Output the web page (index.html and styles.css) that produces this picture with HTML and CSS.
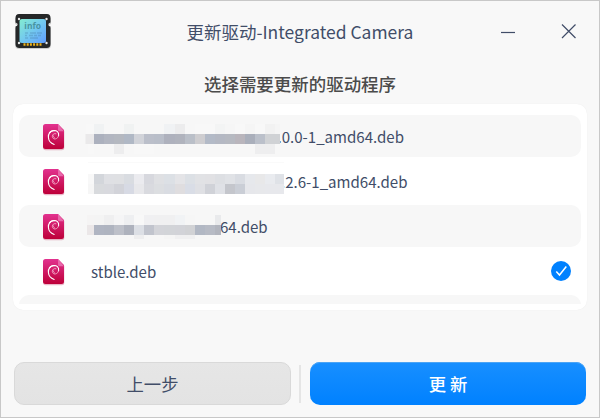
FILE: index.html
```html
<!DOCTYPE html>
<html lang="zh-CN">
<head>
<meta charset="utf-8">
<title>更新驱动-Integrated Camera</title>
<link rel="stylesheet" href="styles.css">
</head>
<body>
<svg class="defs" width="0" height="0" aria-hidden="true">
  <defs>
    <linearGradient id="deb-fill" x1="0" y1="0" x2="0" y2="1"><stop offset="0" stop-color="#e2328f"/><stop offset="1" stop-color="#bd0039"/></linearGradient>
    <symbol id="deb" viewBox="0 0 22 27">
      <path d="M2.5 1.2H15.5L21.3 7V23.7a2.5 2.5 0 0 1-2.5 2.5H2.7A2.5 2.5 0 0 1 .2 23.7V3.5Z" fill="#b4003c" opacity=".28"/>
      <path d="M2.5 0H15L21 6V22.5A2.5 2.5 0 0 1 18.5 25H2.5A2.5 2.5 0 0 1 0 22.5V2.5A2.5 2.5 0 0 1 2.5 0Z" fill="url(#deb-fill)"/>
      <path d="M15 0L21 7.2H16.5A1.5 1.5 0 0 1 15 5.7Z" fill="#e868aa"/>
      <path d="M15.600 11.800C16.200 8.200 13.600 6.300 10.700 6.500C7.200 6.700 5.200 9.800 5.400 13.200C5.600 16.500 7.800 19.200 11.200 20.400" fill="none" stroke="#fff" stroke-width="1.100" stroke-linecap="round"/>
      <path d="M6.300 9.300C7.500 7.200 10 6.300 12.300 6.700" fill="none" stroke="#fff" stroke-width="1.300"/>
      <path d="M13.300 9.800C11 9.100 9.300 10.500 9.300 12.300C9.400 14.200 10.900 15.400 12.500 14.900C14.200 14.500 15.300 13.300 15.500 11.600M10.600 11.600C10.200 13 11 13.900 12 14" fill="none" stroke="#fbd0e2" stroke-width=".7"/>
    </symbol>
  </defs>
</svg>
<div class="window">
  <header class="titlebar">
    <svg class="app-icon" width="38" height="36" viewBox="0 0 38 36">
      <defs><linearGradient id="screen" x1="0" y1="0" x2="1" y2="1"><stop offset="0" stop-color="#83ecd0"/><stop offset=".5" stop-color="#73c9ef"/><stop offset="1" stop-color="#609dff"/></linearGradient></defs>
      <path d="M5 2H33Q37 2 37 6V10Q34.800 10.500 34.800 12.200T37 14V31Q37 35 33 35H5Q1 35 1 31V14Q3.200 13.700 3.200 12T1 10V6Q1 2 5 2Z" fill="#999" opacity=".45"/>
      <path d="M5 0H33Q36.500 0 36.500 4V8.500Q34.300 9 34.300 10.700T36.500 12.500V30Q36.500 34 32.500 34H5.500Q1.500 34 1.500 30V12.500Q3.700 12.300 3.700 10.600T1.500 8.500V4Q1.500 0 5 0Z" fill="#252728"/>
      <g fill="#e6e8e8"><circle cx="5" cy="5" r="1.200"/><circle cx="32.500" cy="5" r="1.200"/><circle cx="5" cy="29" r="1.200"/><circle cx="32.500" cy="29" r="1.200"/></g>
      <rect x="5.500" y="5" width="26.500" height="24" rx="2.500" fill="url(#screen)"/>
      <text x="18.700" y="15.400" class="app-icon-text">info</text>
      <g stroke="#42769d" stroke-width="1.500" opacity=".3"><path d="M11 19h3m2 0h6m1 0h5M11 21.500h2m2 0h4m1 0h3m1 0h3M11 24h3m2 0h8"/></g>
      <path d="M9.500 30.500h2m1.200 0h2m1.200 0h2m1.200 0h2m1.200 0h2m1.200 0h2" stroke="#efb419" stroke-width="2.300"/>
    </svg>
    <h1 class="title">更新驱动-Integrated Camera</h1>
    <svg class="controls" width="78" height="20" viewBox="0 0 78 20" fill="none" stroke="#414d68">
      <path d="M0 11.500H14" stroke-width="1.200"/>
      <path d="M61 3.500L74.500 17M74.500 3.500L61 17" stroke-width="1.200"/>
    </svg>
  </header>
  <h2 class="subtitle">选择需要更新的驱动程序</h2>
  <main class="panel">
    <ul class="list">
      <li class="row alt"><svg class="deb"><use href="#deb"/></svg><svg class="mosaic" data-row="0" width="196" height="42"></svg><span class="name from-a">.0.0-1_amd64.deb</span></li>
      <li class="row"><svg class="deb"><use href="#deb"/></svg><svg class="mosaic" data-row="1" width="199" height="42"></svg><span class="name from-b">.2.6-1_amd64.deb</span></li>
      <li class="row alt"><svg class="deb"><use href="#deb"/></svg><svg class="mosaic" data-row="2" width="136" height="42"></svg><span class="name from-c">64.deb</span></li>
      <li class="row"><svg class="deb"><use href="#deb"/></svg><span class="name plain">stble.deb</span>
        <svg class="check" width="20" height="20" viewBox="0 0 20 20"><circle cx="10" cy="10" r="10" fill="#0081ff"/><path d="M5.300 10.500L8.500 14L15.300 5.500" fill="none" stroke="#fff" stroke-width="1.500"/></svg></li>
      <li class="row alt"></li>
    </ul>
  </main>
  <footer class="actions">
    <button class="btn back">上一步</button>
    <span class="divider"></span>
    <button class="btn primary">更 新</button>
  </footer>
</div>
<script src="mosaic.js"></script>
</body>
</html>
```
FILE: mosaic.js
```js
// Each strip: top, height, right edge, left edge, colours of the 10px cells.
// The first colour fills the narrow leading cell that ends at x = 9.
const rows = [
  [
    [9, 10, 195, 0.5, "f8f8f8 f0f2f3 f7f7f7 f7f7f7 f0f2f2 f7f7f7 f7f7f7 f7f7f7 f0f2f4 ececed f7f7f7 f8f8f8 f8f8f8 f3f4f4 f6f6f6 f8f8f8 f5f5f5 f8f8f8 f2f2f2 f5f5f5"],
    [19, 10, 195, 0.5, "eae9ea acb1be b2b6c1 b4b8c0 b0b8c5 d1d3d9 bbbfca b9bec9 aeb1bd b0b3bd babfc8 cecdd0 b3bac7 b4b8c3 b6b9c1 b9b5bc aaafbb bbc0ca d0d2d5 d0d2d5"],
    [29, 10, 195, 3, "f8f8f8 f7f7f7 f7f7f7 ededee f7f7f7 f8f8f8 f8f8f8 f7f7f7 f7f7f7 f7f7f7 f7f7f7 f7f7f7 f7f7f7 f7f7f7 f7f7f7 f7f7f7 f7f7f7 eeeeef eeeeef f7f7f7"]
  ],
  [
    [2, 1, 199, 3, "fafafa fafafa fafafa fafafa fafafa fafafa fafafa fafafa fafafa fafafa fafafa fafafa fafafa fafafa fafafa fafafa fafafa fafafa fafafa fafafa"],
    [14, 10, 199, 3, "f8f8f8 d3d6db dfe0e4 dfe0e3 d9dce1 ebebef d7d8de dfe0e3 dce0e5 e4e4e7 dce0e5 e1e2e5 e1e1e4 dddfe3 e0e2e6 d9dce2 e6e8ec e8e8e9 e9ebef dfe2e7"],
    [24, 10, 199, 3, "f6f6f6 d8dadd d8d9de d2d3d9 d7dae4 e8e8eb d9dadf dcdee1 d9dce2 dfdddf d9dde6 dfe0e4 d0d2d8 dfe1e6 c4c6cc caced6 e6e7eb e7e8eb e7e8ec e7e8ec"]
  ],
  [
    [10, 10, 136, 2, "f5f4f4 f4f4f4 efeff0 f5f5f6 eeeff1 f8f8f8 f0f0f2 f0f0f1 f0f0f1 f1f3f5 f6f6f6 f7f7f7 f7f7f7 e9eaec"],
    [20, 10, 136, 2, "ebe7e8 b0b5c2 afb4c0 bdc0c9 aeb2bd dcdfe5 c1c4cd d3d4d9 d2d4d8 d2d3d8 d1d2d5 b2b8c4 b7bbc5 b2b5be"],
    [30, 4, 132, 5, "f8f8f8 f7f7f7 f7f7f7 f7f7f7 f7f7f7 eeeeef f7f7f7 f7f7f7 f5f5f5 f0f0f1 f0f0f1 f7f7f7 f7f7f7 f7f7f7"]
  ]
];

document.querySelectorAll(".mosaic").forEach((svg) => {
  rows[svg.dataset.row].forEach(([y, height, right, left, list]) => {
    const colours = list.split(" ");
    colours.forEach((colour, i) => {
      const x = i === 0 ? left : Math.round(9 + (i - 1) * 10.07);
      const end = i === colours.length - 1 ? right : Math.round(9 + i * 10.07);
      const cell = document.createElementNS("http://www.w3.org/2000/svg", "rect");
      cell.setAttribute("x", x);
      cell.setAttribute("y", y);
      cell.setAttribute("width", end - x);
      cell.setAttribute("height", height);
      cell.setAttribute("fill", "#" + colour);
      svg.append(cell);
    });
  });
});
```
FILE: styles.css
```css
* { box-sizing: border-box; }

body {
  margin: 0;
  font-family: "Noto Sans CJK SC", "Noto Sans", sans-serif;
  color: #414d68;
}

.defs { display: block; }

.window {
  display: flex;
  flex-direction: column;
  width: 600px;
  height: 418px;
  border: 1px solid #c8c8c8;
  background: #f8f8f8;
  overflow: hidden;
}

.titlebar {
  display: grid;
  grid-template-columns: 92px 1fr 92px;
  align-items: start;
  height: 64px;
  padding: 13px 6px 0 13px;
}

.app-icon-text {
  font: bold 8.5px "Noto Sans", sans-serif;
  fill: #3c858f;
  fill-opacity: .8;
  text-anchor: middle;
}

.title {
  margin: 5px 0 0;
  padding-right: 7px;
  font-size: 17.47px;
  font-weight: 400;
  line-height: 26px;
  text-align: center;
  white-space: nowrap;
}

.controls { margin-top: 7px; }

.subtitle {
  margin: 6px 0 0;
  height: 33px;
  font-size: 17.47px;
  font-weight: 500;
  line-height: 26px;
  text-align: center;
  color: #4b4b4b;
}

.panel {
  height: 206px;
  margin: 0 12px;
  padding: 11px 6px 6px;
  border-radius: 10px;
  background: #fff;
  box-shadow: 0 0 1px rgba(0, 0, 0, .08);
}

.list {
  display: flex;
  flex-direction: column;
  gap: 3px;
  height: 189px;
  margin: 0;
  padding: 0;
  list-style: none;
  overflow: hidden;
}

.row {
  display: flex;
  flex: none;
  align-items: center;
  height: 42px;
  padding-left: 24px;
  padding-right: 10px;
  border-radius: 10px;
}

.alt { background: #f7f7f7; }

.deb {
  width: 22px;
  height: 27px;
  margin-right: 20px;
  margin-top: 3px;
}

.mosaic { flex: none; z-index: 1; }

.name {
  font-size: 15.05px;
  line-height: 24px;
  margin-top: 2px;
  white-space: nowrap;
}

.from-a { margin-left: -3.5px; }
.from-b { margin-left: -3px; }
.from-c { margin-left: -1px; }
.plain { margin-left: 6px; }
.check { margin-left: auto; }

.actions {
  display: flex;
  align-items: center;
  margin-top: 52px;
  padding: 0 12px 0 13px;
}

.btn {
  height: 43px;
  padding: 0;
  border-radius: 10px;
  font: inherit;
  font-size: 17.33px;
  line-height: 26px;
}

.back {
  width: 277px;
  border: 1px solid #d9d9d9;
  background: linear-gradient(#e6e6e6, #e3e3e3);
  color: #414d68;
}

.divider {
  width: 2px;
  height: 38px;
  margin: 0 9px 0 8px;
  background: #e5e5e5;
}

.primary {
  width: 276px;
  border: 0;
  background: linear-gradient(#188fff, #0081ff);
  box-shadow: inset 0 1px 0 #4ba4f5;
  color: #fff;
  font-weight: 500;
}
```
